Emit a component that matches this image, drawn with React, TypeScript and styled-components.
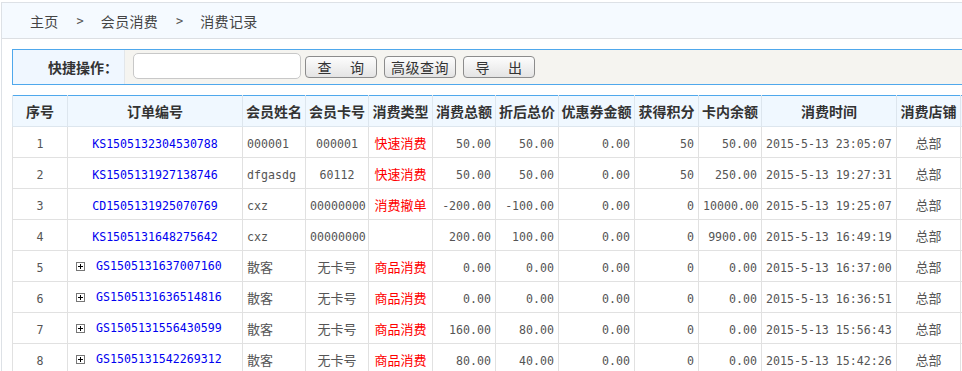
import React from "react";
import styled, { createGlobalStyle } from "styled-components";

const GlobalStyle = createGlobalStyle`
  html, body {
    margin: 0;
    padding: 0;
    overflow: hidden;
    background: #fff;
  }
  body {
    font-family: "Noto Sans CJK SC", "Liberation Sans", sans-serif;
    font-size: 13px;
    color: #555;
  }
`;

const Page = styled.div`
  padding: 2px 0 0 1px;
  width: 1200px;
`;

const Frame = styled.div`
  border-top: 1px solid #dde1e6;
  border-left: 1px solid #dde1e6;
  min-height: 369px;
`;

const Breadcrumb = styled.div`
  height: 35px;
  background: #f5faff;
  border-bottom: 1px solid #dcdfe3;
  display: flex;
  align-items: center;
  padding-left: 28px;
  font-size: 14px;
  color: #444;
`;

const Crumb = styled.span`
  letter-spacing: 0.3px;
`;

const Sep = styled.span`
  font-family: "DejaVu Sans Mono", monospace;
  font-size: 12px;
  color: #555;
  margin: 0 17px 0 18px;
`;

const Content = styled.div`
  padding: 10px 0 0 10px;
`;

const QuickBar = styled.div`
  display: flex;
  height: 34px;
  border: 1px solid #4fa8ec;
  border-right: none;
  background: #f5f4f0;
`;

const QuickLabel = styled.div`
  width: 112px;
  background: #f0f7ff;
  border-right: 1px solid #e2e6ea;
  display: flex;
  align-items: center;
  justify-content: flex-end;
  padding-right: 6px;
  box-sizing: border-box;
  font-weight: 700;
  font-size: 14px;
  color: #333;
`;

const QuickControls = styled.div`
  display: flex;
  align-items: center;
  padding-left: 8px;
  gap: 4px;
`;

const SearchInput = styled.input`
  width: 168px;
  height: 26px;
  box-sizing: border-box;
  border: 1px solid #c8c8c8;
  border-radius: 5px;
  background: #fff;
  margin-top: -2px;
  outline: none;
`;

const Button = styled.button<{ $spaced?: boolean }>`
  width: 72px;
  height: 22px;
  margin-left: ${({ $spaced }) => ($spaced ? "3px" : "0")};
  box-sizing: border-box;
  border: 1px solid #8c8c8c;
  border-radius: 4px;
  background: linear-gradient(#fdfdfd, #e4e4e4);
  font-family: "Noto Sans CJK SC", sans-serif;
  font-size: 14px;
  color: #333;
  padding: 0;
  line-height: 20px;
  letter-spacing: 0.5px;
  white-space: pre;
`;

const Table = styled.table`
  margin-top: 10px;
  border-collapse: collapse;
  table-layout: fixed;
  width: 1010px;
  border-top: 1px solid #4fa8ec;
`;

const HeadCell = styled.th`
  height: 30px;
  padding: 0;
  background: #f0f8ff;
  border: 1px solid #dde6ee;
  border-top: none;
  font-size: 14px;
  font-weight: 700;
  color: #333;
  text-align: center;
  white-space: nowrap;
  overflow: hidden;
`;

const Cell = styled.td<{ $align?: "left" | "center" | "right"; $red?: boolean }>`
  height: 30px;
  padding: 0 4px;
  border: 1px solid #e1e1e1;
  text-align: ${({ $align }) => $align || "center"};
  color: ${({ $red }) => ($red ? "#f00" : "#555")};
  white-space: nowrap;
  overflow: hidden;
  font-size: 13px;
`;

const Num = styled.span`
  font-family: "DejaVu Sans Mono", "Liberation Mono", monospace;
  font-size: 11.6px;
`;

const OrderLink = styled.a`
  font-family: "DejaVu Sans Mono", "Liberation Mono", monospace;
  font-size: 11.6px;
  color: #0000f0;
  text-decoration: none;
`;

const OrderWrap = styled.div`
  display: flex;
  align-items: center;
  gap: 11px;
  padding-left: 4px;
`;

const Expand = () => (
  <svg width="9" height="9" viewBox="0 0 9 9">
    <rect x="0.5" y="0.5" width="8" height="8" fill="#fff" stroke="#777" />
    <path d="M2 4.5h5M4.5 2v5" stroke="#000" strokeWidth="1" />
  </svg>
);

type Row = {
  no: number;
  order: string;
  name: string;
  card: string;
  type: string;
  total: string;
  net: string;
  coupon: string;
  points: string;
  balance: string;
  time: string;
  store: string;
};

const row = (
  no: number,
  order: string,
  name: string,
  card: string,
  type: string,
  total: string,
  net: string,
  points: string,
  balance: string,
  time: string
): Row => ({ no, order, name, card, type, total, net, coupon: "0.00", points, balance, time, store: "总部" });

const rows: Row[] = [
  row(1, "KS1505132304530788", "000001", "000001", "快速消费", "50.00", "50.00", "50", "50.00", "2015-5-13 23:05:07"),
  row(2, "KS1505131927138746", "dfgasdg", "60112", "快速消费", "50.00", "50.00", "50", "250.00", "2015-5-13 19:27:31"),
  row(3, "CD1505131925070769", "cxz", "00000000", "消费撤单", "-200.00", "-100.00", "0", "10000.00", "2015-5-13 19:25:07"),
  row(4, "KS1505131648275642", "cxz", "00000000", "", "200.00", "100.00", "0", "9900.00", "2015-5-13 16:49:19"),
  row(5, "GS1505131637007160", "散客", "无卡号", "商品消费", "0.00", "0.00", "0", "0.00", "2015-5-13 16:37:00"),
  row(6, "GS1505131636514816", "散客", "无卡号", "商品消费", "0.00", "0.00", "0", "0.00", "2015-5-13 16:36:51"),
  row(7, "GS1505131556430599", "散客", "无卡号", "商品消费", "160.00", "80.00", "0", "0.00", "2015-5-13 15:56:43"),
  row(8, "GS1505131542269312", "散客", "无卡号", "商品消费", "80.00", "40.00", "0", "0.00", "2015-5-13 15:42:26"),
];

const columns: [string, number][] = [
  ["序号", 55],
  ["订单编号", 175],
  ["会员姓名", 63],
  ["会员卡号", 63],
  ["消费类型", 64],
  ["消费总额", 63],
  ["折后总价", 63],
  ["优惠券金额", 76],
  ["获得积分", 64],
  ["卡内余额", 63],
  ["消费时间", 135],
  ["消费店铺", 64],
  ["", 62],
];

// latin names/cards render in the mono face, chinese ones in the cjk face
const isLatin = (s: string) => /^[\x20-\x7e]*$/.test(s);
const text = (s: string) => (isLatin(s) ? <Num>{s}</Num> : s);

export default function App() {
  return (
    <Page>
      <GlobalStyle />
      <Frame>
        <Breadcrumb>
          <Crumb>主页</Crumb>
          <Sep>&gt;</Sep>
          <Crumb>会员消费</Crumb>
          <Sep>&gt;</Sep>
          <Crumb>消费记录</Crumb>
        </Breadcrumb>
        <Content>
          <QuickBar>
            <QuickLabel>快捷操作：</QuickLabel>
            <QuickControls>
              <SearchInput type="text" />
              <Button>{"查　 询"}</Button>
              <Button $spaced>高级查询</Button>
              <Button $spaced>{"导　 出"}</Button>
            </QuickControls>
          </QuickBar>
          <Table>
            <colgroup>
              {columns.map(([name, w], i) => (
                <col key={i} style={{ width: w }} />
              ))}
            </colgroup>
            <thead>
              <tr>
                {columns.map(([name], i) => (
                  <HeadCell key={i}>{name}</HeadCell>
                ))}
              </tr>
            </thead>
            <tbody>
              {rows.map((r) => {
                const goods = r.order.startsWith("GS");
                return (
                  <tr key={r.order}>
                    <Cell>
                      <Num>{r.no}</Num>
                    </Cell>
                    {goods ? (
                      <Cell $align="left">
                        <OrderWrap>
                          <Expand />
                          <OrderLink href="#">{r.order}</OrderLink>
                        </OrderWrap>
                      </Cell>
                    ) : (
                      <Cell>
                        <OrderLink href="#">{r.order}</OrderLink>
                      </Cell>
                    )}
                    <Cell $align="left">{text(r.name)}</Cell>
                    <Cell>{text(r.card)}</Cell>
                    <Cell $red>{r.type}</Cell>
                    <Cell $align="right">
                      <Num>{r.total}</Num>
                    </Cell>
                    <Cell $align="right">
                      <Num>{r.net}</Num>
                    </Cell>
                    <Cell $align="right">
                      <Num>{r.coupon}</Num>
                    </Cell>
                    <Cell $align="right">
                      <Num>{r.points}</Num>
                    </Cell>
                    <Cell $align="right">
                      <Num>{r.balance}</Num>
                    </Cell>
                    <Cell $align="left">
                      <Num>{r.time}</Num>
                    </Cell>
                    <Cell>{r.store}</Cell>
                    <Cell />
                  </tr>
                );
              })}
            </tbody>
          </Table>
        </Content>
      </Frame>
    </Page>
  );
}
